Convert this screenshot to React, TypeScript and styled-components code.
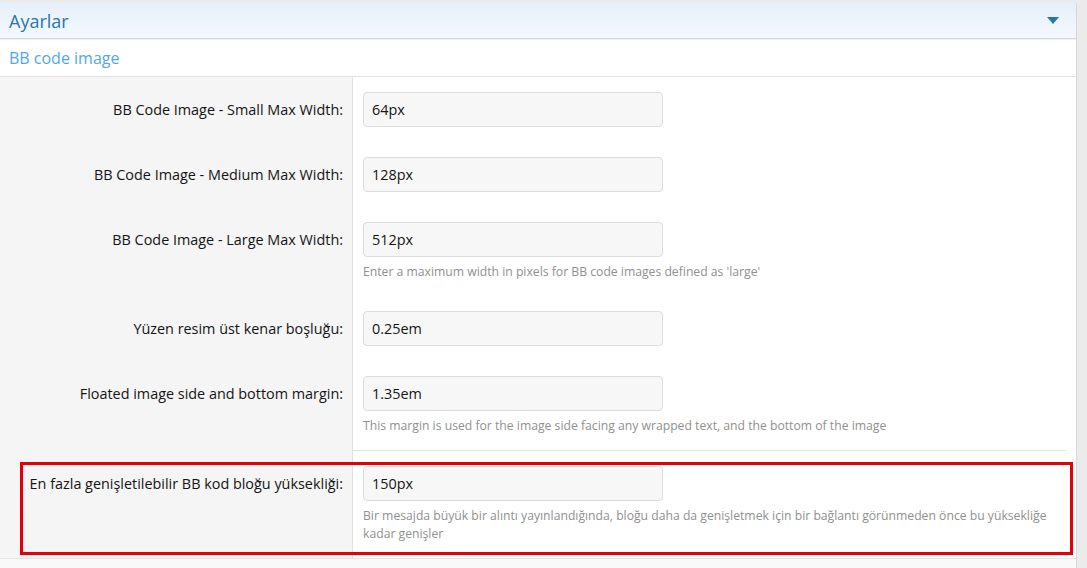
import React from "react";
import styled, { createGlobalStyle } from "styled-components";

const Global = createGlobalStyle`
  html, body { margin: 0; padding: 0; }
  body {
    background: #ebebeb;
    font-family: "Open Sans", "Noto Sans", "Liberation Sans", sans-serif;
    color: #141414;
  }
`;

const Page = styled.div`
  padding-top: 3px;
  width: 1077px;
  height: 565px;
  overflow: hidden;
`;

const Panel = styled.div`
  background: #fff;
  border-right: 1px solid #d8d8d8;
  height: 100%;
  display: flex;
  flex-direction: column;
`;

const Header = styled.div`
  height: 35px;
  display: flex;
  align-items: center;
  justify-content: space-between;
  padding: 0 17px 0 9px;
  background: linear-gradient(#e6f0fa, #f3f8fd);
  border-bottom: 1px solid #d6d6d6;
  box-shadow: 0 1px 1px rgba(0, 0, 0, 0.05);
`;

const HeaderTitle = styled.h2`
  margin: 0;
  font-size: 18px;
  font-weight: 400;
  color: #2577b1;
`;

const SubHeader = styled.h3`
  margin: 0;
  height: 37px;
  display: flex;
  align-items: center;
  padding-left: 9px;
  font-size: 16px;
  font-weight: 400;
  color: #4fa8e8;
  border-bottom: 1px solid #e2e2e2;
`;

const Rows = styled.div`
  display: flex;
  flex-direction: column;
`;

const Row = styled.div`
  position: relative;
  display: grid;
  grid-template-columns: 353px 1fr;
`;

const LabelCell = styled.div`
  background: #f5f5f5;
  border-right: 1px solid #e0e0e0;
  padding: 15px 9px 15px 0;
  text-align: right;
  font-size: 14.4px;
  line-height: 35px;
`;

const InputCell = styled.div`
  padding: 15px 10px;
`;

const Input = styled.div`
  width: 300px;
  height: 35px;
  box-sizing: border-box;
  border: 1px solid #dcdcdc;
  border-radius: 4px;
  background: #f7f7f7;
  padding: 0 8px;
  display: flex;
  align-items: center;
  font-size: 14.4px;
`;

const Hint = styled.div`
  margin-top: 6px;
  font-size: 12.2px;
  line-height: 18px;
  color: #909090;
`;

const SepFill = styled.div`
  background: #f5f5f5;
  border-right: 1px solid #e0e0e0;
`;

const SepLine = styled.div`
  height: 1px;
  margin-right: 10px;
  background: #e2e2e2;
`;

const Footer = styled.div`
  flex: 1;
  background: #f9f9f9;
  border-top: 1px solid #e4e4e4;
`;

const Highlight = styled.div`
  position: absolute;
  left: 20px;
  top: 11px;
  width: 1053px;
  height: 93px;
  box-sizing: border-box;
  border: 3px solid #e3000b;
  pointer-events: none;
`;

type Field = { label: string; value: string; hint?: string };

const fields: Field[] = [
  { label: "BB Code Image - Small Max Width:", value: "64px" },
  { label: "BB Code Image - Medium Max Width:", value: "128px" },
  {
    label: "BB Code Image - Large Max Width:",
    value: "512px",
    hint: "Enter a maximum width in pixels for BB code images defined as 'large'",
  },
  { label: "Yüzen resim üst kenar boşluğu:", value: "0.25em" },
  {
    label: "Floated image side and bottom margin:",
    value: "1.35em",
    hint: "This margin is used for the image side facing any wrapped text, and the bottom of the image",
  },
];

const FormRow = ({ f, children }: { f: Field; children?: React.ReactNode }) => (
  <Row>
    <LabelCell>{f.label}</LabelCell>
    <InputCell>
      <Input>{f.value}</Input>
      {f.hint && <Hint>{f.hint}</Hint>}
    </InputCell>
    {children}
  </Row>
);

export default function App() {
  return (
    <>
      <Global />
      <Page>
        <Panel>
          <Header>
            <HeaderTitle>Ayarlar</HeaderTitle>
            <svg width="12" height="7" viewBox="0 0 12 7">
              <path d="M0 0 H12 L6 7 Z" fill="#2577b1" />
            </svg>
          </Header>
          <SubHeader>BB code image</SubHeader>
          <Rows>
            {fields.map((f) => (
              <FormRow key={f.label} f={f} />
            ))}
            <Row>
              <SepFill />
              <SepLine />
            </Row>
            <FormRow
              f={{
                label: "En fazla genişletilebilir BB kod bloğu yüksekliği:",
                value: "150px",
                hint:
                  "Bir mesajda büyük bir alıntı yayınlandığında, bloğu daha da genişletmek için bir bağlantı görünmeden önce bu yüksekliğe kadar genişler",
              }}
            >
              <Highlight />
            </FormRow>
          </Rows>
          <Footer />
        </Panel>
      </Page>
    </>
  );
}
